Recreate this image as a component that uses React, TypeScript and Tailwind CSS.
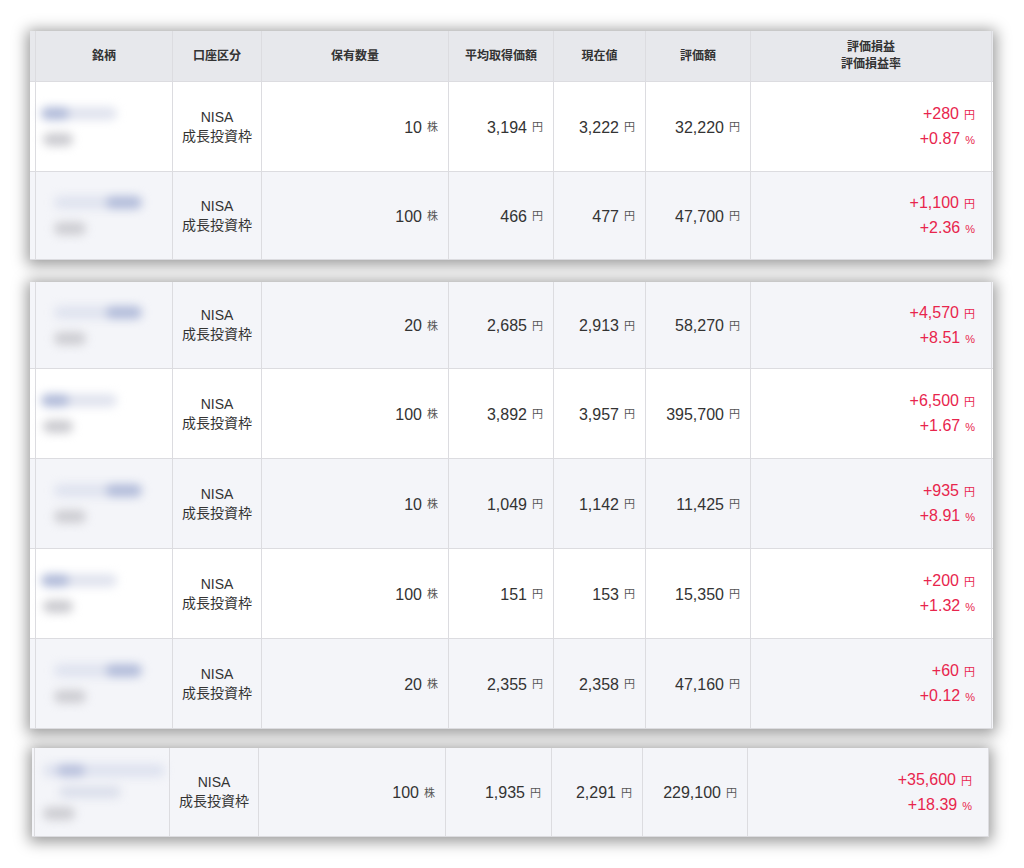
const FONT = { fontFamily: '"Liberation Sans", "Noto Sans CJK JP", sans-serif' }

type Holding = {
  qty: string
  avg: string
  price: string
  value: string
  gain: string
  rate: string
  bg: 'white' | 'gray'
  name: 'a' | 'b' | 'c'
  h: string
}

const COLS_MAIN = 'grid-cols-[6px_137px_89px_187px_105px_92px_105px_241px]'
const COLS_LAST = 'grid-cols-[3px_135px_89px_187px_106px_91px_105px_241px]'

function NameBlur({ kind }: { kind: 'a' | 'b' | 'c' }) {
  if (kind === 'a') {
    return (
      <div className="flex flex-col gap-[13px] pl-[5px] blur-[5px]">
        <div className="flex h-[13px] w-[76px] rounded-full bg-[#e0e3ee]">
          <div className="h-full w-[28px] rounded-full bg-[#b1bbd9]" />
        </div>
        <div className="ml-[2px] h-[13px] w-[30px] rounded-full bg-[#cbcbd0]" />
      </div>
    )
  }
  if (kind === 'b') {
    return (
      <div className="flex flex-col gap-[13px] pl-[18px] blur-[5px]">
        <div className="flex h-[13px] w-[88px] justify-end rounded-full bg-[#dfe3ef]">
          <div className="h-full w-[36px] rounded-full bg-[#b2bcda]" />
        </div>
        <div className="h-[13px] w-[32px] rounded-full bg-[#cdcdd2]" />
      </div>
    )
  }
  return (
    <div className="flex flex-col gap-[9px] pl-[8px] blur-[5px]">
      <div className="flex h-[13px] w-[122px] rounded-full bg-[#dee2ef]">
        <div className="ml-[14px] h-full w-[28px] rounded-full bg-[#b9c1dd]" />
      </div>
      <div className="ml-[16px] h-[12px] w-[62px] rounded-full bg-[#dbdfeb]" />
      <div className="h-[13px] w-[32px] rounded-full bg-[#cdcdd2]" />
    </div>
  )
}

function Num({ v, unit }: { v: string; unit: string }) {
  return (
    <div className="flex h-full items-center justify-end pr-[10px] pt-[2px] text-[16px] text-[#333]">
      <span>{v}</span>
      <span className="ml-[5px] text-[11px] text-[#555]">{unit}</span>
    </div>
  )
}

function Row({ r, cols }: { r: Holding; cols: string }) {
  const bg = r.bg === 'white' ? 'bg-white' : 'bg-[#f4f5f9]'
  return (
    <div className={`grid ${cols} ${r.h} ${bg} border-b border-[#dcdce0]`}>
      <div className="border-r border-[#dcdce0]" />
      <div className="flex items-center border-r border-[#dcdce0]">
        <NameBlur kind={r.name} />
      </div>
      <div className="flex flex-col items-center justify-center border-r border-[#dcdce0] text-[14px] leading-[19px] text-[#333]">
        <span>NISA</span>
        <span>成長投資枠</span>
      </div>
      <div className="border-r border-[#dcdce0]">
        <Num v={r.qty} unit="株" />
      </div>
      <div className="border-r border-[#dcdce0]">
        <Num v={r.avg} unit="円" />
      </div>
      <div className="border-r border-[#dcdce0]">
        <Num v={r.price} unit="円" />
      </div>
      <div className="border-r border-[#dcdce0]">
        <Num v={r.value} unit="円" />
      </div>
      <div className="flex flex-col items-end justify-center gap-[4px] border-r border-[#dcdce0] pr-[16px] pt-[1px] text-[16px] leading-[19px] text-[#e8254d]">
        <div>
          {r.gain}
          <span className="ml-[5px] text-[11px]">円</span>
        </div>
        <div>
          {r.rate}
          <span className="ml-[5px] text-[11px]">%</span>
        </div>
      </div>
    </div>
  )
}

const FIRST: Holding[] = [
  { qty: '10', avg: '3,194', price: '3,222', value: '32,220', gain: '+280', rate: '+0.87', bg: 'white', name: 'a', h: 'h-[90px]' },
  { qty: '100', avg: '466', price: '477', value: '47,700', gain: '+1,100', rate: '+2.36', bg: 'gray', name: 'b', h: 'h-[88px]' },
]

const SECOND: Holding[] = [
  { qty: '20', avg: '2,685', price: '2,913', value: '58,270', gain: '+4,570', rate: '+8.51', bg: 'gray', name: 'b', h: 'h-[87px]' },
  { qty: '100', avg: '3,892', price: '3,957', value: '395,700', gain: '+6,500', rate: '+1.67', bg: 'white', name: 'a', h: 'h-[90px]' },
  { qty: '10', avg: '1,049', price: '1,142', value: '11,425', gain: '+935', rate: '+8.91', bg: 'gray', name: 'b', h: 'h-[90px]' },
  { qty: '100', avg: '151', price: '153', value: '15,350', gain: '+200', rate: '+1.32', bg: 'white', name: 'a', h: 'h-[90px]' },
  { qty: '20', avg: '2,355', price: '2,358', value: '47,160', gain: '+60', rate: '+0.12', bg: 'gray', name: 'b', h: 'h-[90px]' },
]

const LAST: Holding = {
  qty: '100', avg: '1,935', price: '2,291', value: '229,100', gain: '+35,600', rate: '+18.39', bg: 'gray', name: 'c', h: 'h-[89px]',
}

const HEADERS = ['銘柄', '口座区分', '保有数量', '平均取得価額', '現在値', '評価額']

const PANEL = 'shadow-[0_2px_14px_3px_rgba(0,0,0,0.4)]'

export default function App() {
  return (
    <div className="min-h-[868px] w-[1024px] bg-white pt-[31px]" style={FONT}>
      <div className={`ml-[30px] w-[963px] ${PANEL}`}>
        <div className={`grid ${COLS_MAIN} h-[51px] border-b border-[#dcdce0] bg-[#e7e8ec] text-[12px] font-bold text-[#333]`}>
          <div className="border-r border-[#dcdce0]" />
          {HEADERS.map((h) => (
            <div key={h} className="flex items-center justify-center border-r border-[#dcdce0]">
              {h}
            </div>
          ))}
          <div className="flex flex-col items-center justify-center border-r border-[#dcdce0] leading-[17px]">
            <span>評価損益</span>
            <span>評価損益率</span>
          </div>
        </div>
        {FIRST.map((r, i) => (
          <Row key={i} r={r} cols={COLS_MAIN} />
        ))}
      </div>

      <div className={`ml-[30px] mt-[22px] w-[963px] ${PANEL}`}>
        {SECOND.map((r, i) => (
          <Row key={i} r={r} cols={COLS_MAIN} />
        ))}
      </div>

      <div className={`ml-[32px] mt-[19px] w-[957px] ${PANEL}`}>
        <Row r={LAST} cols={COLS_LAST} />
      </div>
    </div>
  )
}
